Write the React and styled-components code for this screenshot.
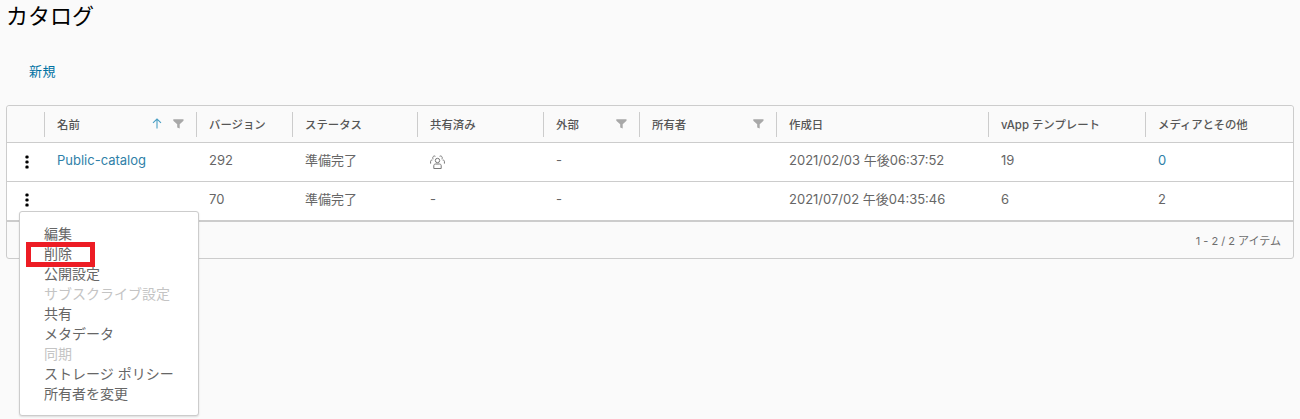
import React from "react";
import styled, { createGlobalStyle } from "styled-components";

const Global = createGlobalStyle`
  html, body { margin: 0; padding: 0; background: #fafafa; }
  body { font-family: Inter, "Noto Sans CJK JP", sans-serif; color: #666; width: 1300px; height: 419px; overflow: hidden; }
`;

const COLS = "37px 152px 96px 125px 126px 96px 137px 212px 157px 1fr";

const Page = styled.div`
  position: relative;
  padding: 0 6px;
  height: 419px;
  box-sizing: border-box;
`;
const Title = styled.h1`
  margin: 0;
  height: 32px;
  font-size: 22px;
  line-height: 28px;
  font-weight: 400;
  color: #000;
  font-family: "Noto Sans CJK JP", sans-serif;
`;
const ActionBar = styled.div`
  height: 73px;
  padding: 31px 0 0 23px;
  box-sizing: border-box;
`;
const NewLink = styled.a`
  display: block;
  font-size: 13px;
  line-height: 16px;
  letter-spacing: 0.4px;
  color: #0072a3;
`;
const Grid = styled.div`
  border: 1px solid #ccc;
  border-radius: 3px;
  background: #fafafa;
  height: 154px;
  box-sizing: border-box;
`;
const Row = styled.div`
  display: grid;
  grid-template-columns: ${COLS};
  height: 39px;
  background: #fff;
  border-bottom: 1px solid #ccc;
  box-sizing: border-box;
  align-items: center;
`;
const HeaderRow = styled(Row)`
  height: 37px;
  background: #fafafa;
  border-radius: 3px 3px 0 0;
`;
const LastRow = styled(Row)`
  border-bottom-width: 2px;
  height: 40px;
`;
const HeadCell = styled.div`
  display: flex;
  align-items: center;
  height: 25px;
  padding: 0 12px 1px;
  border-left: ${(p) => (p.$plain ? "none" : "1px solid #ccc")};
  font-size: 11.4px;
  font-weight: 500;
  color: #565656;
  box-sizing: border-box;
  white-space: nowrap;
`;
const HeadLabel = styled.span`
  flex: 1;
`;
const Cell = styled.div`
  font-size: 13px;
  line-height: 16px;
  padding-left: 13px;
  padding-bottom: 4px;
  color: ${(p) => (p.$link ? "#2f7fa8" : "#666")};
  white-space: nowrap;
`;
const KebabCell = styled.div`
  display: flex;
  justify-content: center;
  padding-left: 3px;
  padding-bottom: ${(p) => p.$lift}px;
`;
const Footer = styled.div`
  height: 36px;
  display: flex;
  align-items: center;
  justify-content: flex-end;
  padding-right: 12px;
  font-size: 11px;
  color: #6e6e6e;
`;
const Menu = styled.div`
  position: absolute;
  left: 19px;
  top: 211px;
  width: 180px;
  height: 205px;
  box-sizing: border-box;
  background: #fff;
  border: 1px solid #ccc;
  border-radius: 3px;
  box-shadow: 0 1px 2px rgba(0, 0, 0, 0.12);
  padding: 12px 0 0 24px;
`;
const MenuItem = styled.div`
  height: 20px;
  line-height: 20px;
  font-size: 14px;
  white-space: nowrap;
  color: ${(p) => (p.$disabled ? "#c4c4c4" : "#666")};
`;
const Highlight = styled.div`
  position: absolute;
  left: 6px;
  top: 30px;
  width: 69px;
  height: 25px;
  box-sizing: border-box;
  border: 5px solid #ed1c24;
`;
const SharedIcon = styled.svg`
  display: block;
  margin-top: 3px;
`;
const SortIcon = styled.svg`
  margin-right: 11px;
`;

const Kebab = () => (
  <svg width="4" height="14" viewBox="0 0 4 14" fill="#000">
    <rect x="0.4" y="0.4" width="3.2" height="3" rx="1.2" />
    <rect x="0.4" y="5.5" width="3.2" height="3" rx="1.2" />
    <rect x="0.4" y="10.6" width="3.2" height="3" rx="1.2" />
  </svg>
);
const Filter = () => (
  <svg width="11" height="10" viewBox="0 0 11 10" fill="#a8a8a8">
    <path d="M0.3 0.3h10.2v1.4L6.7 5.2v4.3L4.2 8.4V5.2L0.3 1.7z" />
  </svg>
);
const SortUp = () => (
  <SortIcon width="10" height="11" viewBox="0 0 10 11" fill="none" stroke="#4a9fc4" strokeWidth="1.1">
    <path d="M5 10.500V1M1 4.800L5 1l4 3.800" />
  </SortIcon>
);
const Group = () => (
  <SharedIcon width="15" height="14" viewBox="0 0 15 14" fill="none" stroke="#777" strokeWidth="1">
    <circle cx="7.500" cy="5.500" r="2.200" />
    <path d="M3.800 13.500v-3c0-.8.800-1.500 1.600-1.500h4.200c.8 0 1.600.7 1.600 1.500v3z" />
    <path d="M5.400 1.300C3.600.2 1.900 2.400 3.200 4.200M.6 8.600V6.300c0-.8.700-1.300 1.800-1.300" />
    <path d="M9.600 1.300c1.800-1.100 3.500 1.100 2.200 2.900M14.400 8.600V6.300c0-.8-.7-1.300-1.800-1.300" />
  </SharedIcon>
);

const heads = [
  { label: "" },
  { label: "名前", sort: true, filter: true },
  { label: "バージョン" },
  { label: "ステータス" },
  { label: "共有済み" },
  { label: "外部", filter: true },
  { label: "所有者", filter: true },
  { label: "作成日" },
  { label: "vApp テンプレート" },
  { label: "メディアとその他" },
];

const rows = [
  { name: "Public-catalog", ver: "292", status: "準備完了", shared: <Group />, ext: "-", date: "2021/02/03 午後06:37:52", vapp: "19", media: "0", mediaLink: true, lift: 1 },
  { name: "", ver: "70", status: "準備完了", shared: "-", ext: "-", date: "2021/07/02 午後04:35:46", vapp: "6", media: "2", lift: 3 },
];

const menu = [
  ["編集"], ["削除"], ["公開設定"], ["サブスクライブ設定", true], ["共有"],
  ["メタデータ"], ["同期", true], ["ストレージ ポリシー"], ["所有者を変更"],
];

const DataRow = ({ r, as: R }) => (
  <R>
    <KebabCell $lift={r.lift}><Kebab /></KebabCell>
    <Cell $link>{r.name}</Cell>
    <Cell>{r.ver}</Cell>
    <Cell>{r.status}</Cell>
    <Cell>{r.shared}</Cell>
    <Cell>{r.ext}</Cell>
    <Cell />
    <Cell>{r.date}</Cell>
    <Cell>{r.vapp}</Cell>
    <Cell $link={r.mediaLink}>{r.media}</Cell>
  </R>
);

export default function App() {
  return (
    <Page>
      <Global />
      <Title>カタログ</Title>
      <ActionBar><NewLink>新規</NewLink></ActionBar>
      <Grid>
        <HeaderRow>
          {heads.map((h, i) => (
            <HeadCell key={i} $plain={i === 0}>
              <HeadLabel>{h.label}</HeadLabel>
              {h.sort && <SortUp />}
              {h.filter && <Filter />}
            </HeadCell>
          ))}
        </HeaderRow>
        <DataRow r={rows[0]} as={Row} />
        <DataRow r={rows[1]} as={LastRow} />
        <Footer>1 - 2 / 2 アイテム</Footer>
      </Grid>
      <Menu>
        {menu.map(([t, d]) => (
          <MenuItem key={t} $disabled={d}>{t}</MenuItem>
        ))}
        <Highlight />
      </Menu>
    </Page>
  );
}
